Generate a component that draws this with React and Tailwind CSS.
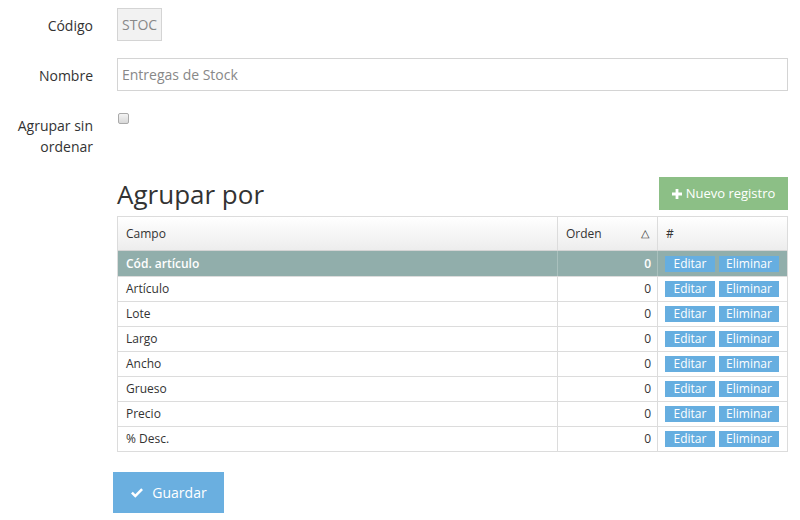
import React from 'react';

const rows = [
    { campo: 'Cód. artículo', orden: 0, selected: true },
    { campo: 'Artículo', orden: 0 },
    { campo: 'Lote', orden: 0 },
    { campo: 'Largo', orden: 0 },
    { campo: 'Ancho', orden: 0 },
    { campo: 'Grueso', orden: 0 },
    { campo: 'Precio', orden: 0 },
    { campo: '% Desc.', orden: 0 }
];

const PlusIcon = () => (
    <svg width="10" height="10" viewBox="0 0 10 10" className="shrink-0">
        <path d="M3.6 0h2.8v3.6H10v2.8H6.4V10H3.6V6.4H0V3.6h3.6z" fill="white" />
    </svg>
);

const CheckIcon = () => (
    <svg width="14" height="12" viewBox="0 0 14 12" className="shrink-0">
        <path d="M1 6.5 L2.8 4.7 L5.3 7.2 L11.2 1.3 L13 3.1 L5.3 10.8 Z" fill="white" />
    </svg>
);

const App = () => {
    return (
        <div className="w-[800px] h-[520px] bg-white text-[#333] font-['Open_Sans',sans-serif] text-[14px] overflow-hidden">
            <div className="flex flex-col pt-[8px] pr-[12px]">
                <div className="flex items-center h-[33px]">
                    <label className="w-[93px] text-right mt-[1px]">Código</label>
                    <div className="ml-[24px] w-[45px] h-[33px] flex items-center px-[4px] bg-[#f2f2f2] border border-[#d4d4d4] text-[#888]">
                        STOC
                    </div>
                </div>

                <div className="flex items-center h-[33px] mt-[17px]">
                    <label className="w-[93px] text-right mt-[1px]">Nombre</label>
                    <div className="ml-[24px] flex-1 h-[33px] flex items-center px-[4px] border border-[#d4d4d4] text-[#888]">
                        Entregas de Stock
                    </div>
                </div>

                <div className="flex items-start mt-[17px]">
                    <label className="w-[93px] text-right leading-[21px] mt-[7px]">
                        Agrupar sin
                        <br />
                        ordenar
                    </label>
                    <div className="ml-[25px] mt-[5px] w-[11px] h-[11px] rounded-[2px] border border-[#aaa] bg-gradient-to-b from-[#f4f4f4] to-[#d8d8d8]" />
                </div>

                <div className="ml-[117px] mt-[20px] flex items-end justify-between">
                    <h2 className="text-[26px] leading-[28px] text-[#333] mb-[2px]">Agrupar por</h2>
                    <button className="w-[129px] h-[33px] bg-[#8cbf86] text-white text-[13px] flex items-center justify-center gap-[4px]">
                        <PlusIcon />
                        Nuevo registro
                    </button>
                </div>

                <div className="ml-[117px] mt-[6px] border border-[#dcdcdc] text-[12px]">
                    <div className="flex h-[34px] bg-gradient-to-b from-white to-[#ededed] border-b border-[#d4d4d4]">
                        <div className="flex-1 flex items-center pl-[8px]">Campo</div>
                        <div className="w-[100px] border-l border-[#dcdcdc] flex items-center justify-between pl-[8px] pr-[8px]">
                            <span>Orden</span>
                            <span className="text-[11px]">△</span>
                        </div>
                        <div className="w-[130px] border-l border-[#dcdcdc] flex items-center pl-[8px]">#</div>
                    </div>
                    {rows.map((r, i) => (
                        <div
                            key={r.campo}
                            className={`flex h-[25px] ${i > 0 ? 'border-t border-[#dcdcdc]' : ''} ${r.selected ? 'bg-[#91aeab] text-white font-semibold' : 'bg-white'}`}
                        >
                            <div className="flex-1 flex items-center pl-[8px]">{r.campo}</div>
                            <div className={`w-[100px] border-l flex items-center justify-end pr-[6px] ${r.selected ? 'border-[#a9c0bd]' : 'border-[#dcdcdc]'}`}>
                                {r.orden}
                            </div>
                            <div className={`w-[130px] border-l flex items-center pl-[7px] gap-[4px] ${r.selected ? 'border-[#a9c0bd]' : 'border-[#dcdcdc]'}`}>
                                <button className="w-[50px] h-[16px] bg-[#66aee0] text-white text-[12px] font-normal leading-[16px]">Editar</button>
                                <button className="w-[60px] h-[16px] bg-[#66aee0] text-white text-[12px] font-normal leading-[16px]">Eliminar</button>
                            </div>
                        </div>
                    ))}
                </div>

                <div className="ml-[113px] mt-[20px]">
                    <button className="w-[111px] h-[41px] bg-[#6aafe0] text-white text-[14px] flex items-center justify-center gap-[8px]">
                        <CheckIcon />
                        Guardar
                    </button>
                </div>
            </div>
        </div>
    );
};

export default App;
